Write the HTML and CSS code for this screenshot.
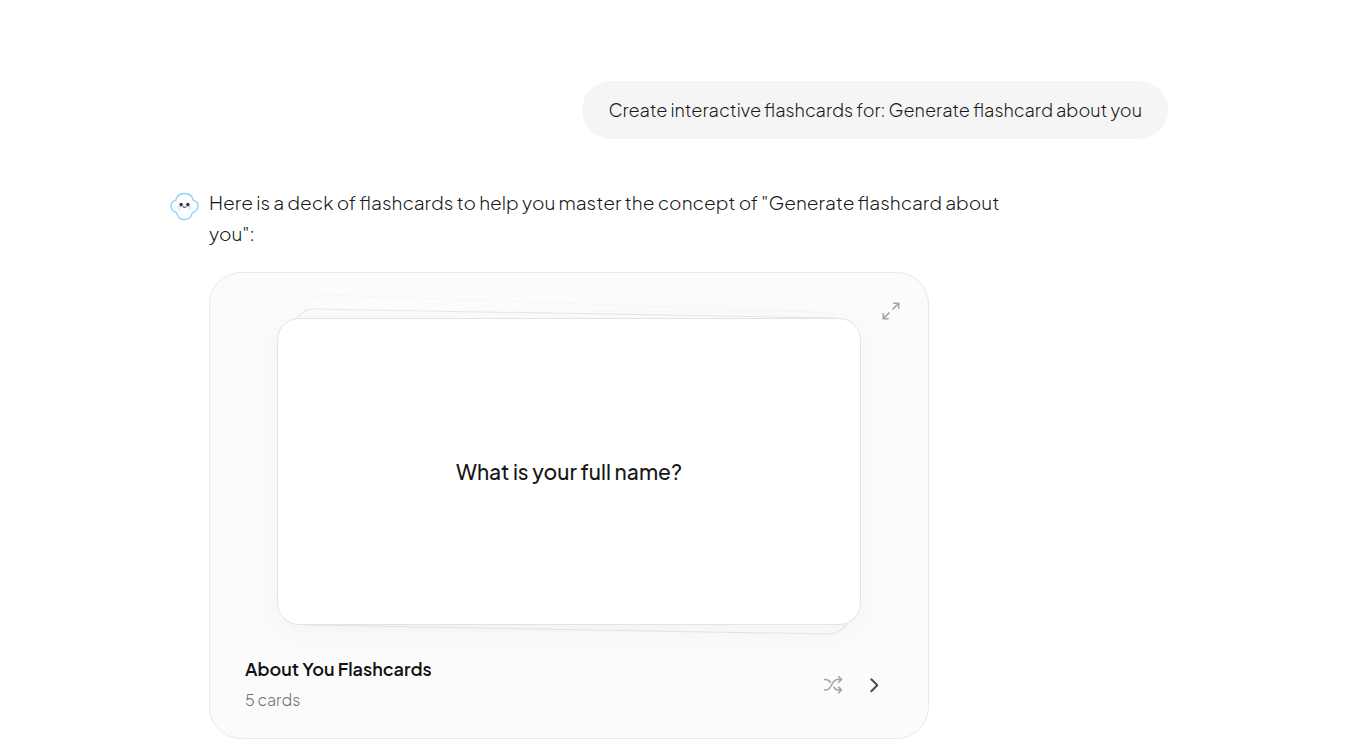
FILE: index.html
```html
<!DOCTYPE html>
<html lang="en">
<head>
<meta charset="utf-8">
<meta name="viewport" content="width=device-width, initial-scale=1">
<title>Flashcards</title>
<link rel="stylesheet" href="styles.css">
</head>
<body>
<main class="chat">
  <p class="prompt">Create interactive flashcards for: Generate flashcard about you</p>
  <article class="reply">
    <svg class="avatar" viewBox="0 0 30 30" fill="none" aria-hidden="true">
      <path d="M6 8.500C7 3.500 11 1.500 15 1.500S23 3.500 24 8.500C27.500 9.500 29 12 29 14.500C29 18 26.500 20 23.800 21C22.800 21.500 23 22.500 22 24.500C20.500 27.500 18 28.500 15 28.500S9.500 27.500 8 24.500C7 22.500 7.200 21.500 6.200 21C3.500 20 1 18 1 14.500C1 12 2.500 9.500 6 8.500Z" fill="#fdfeff" stroke="#8fd2f4" stroke-width="1.400"/>
      <circle cx="9.500" cy="16.300" r="2" fill="#dceefe"/>
      <circle cx="20.500" cy="16.300" r="2" fill="#dceefe"/>
      <ellipse cx="11.500" cy="13" rx="1.700" ry="2" fill="#34343c"/>
      <ellipse cx="18.500" cy="13" rx="1.700" ry="2" fill="#34343c"/>
      <path d="M13.500 15Q15 17 16.500 15" stroke="#55505c" stroke-width="1.200" stroke-linecap="round"/>
    </svg>
    <div class="content">
      <p class="intro">Here is a deck of flashcards to help you master the concept of "Generate flashcard about you":</p>
      <section class="panel" aria-labelledby="deck-title">
        <button class="icon-button expand" type="button" aria-label="Expand">
          <svg width="20" height="20" viewBox="0 0 20 20" fill="none" stroke="#a3a3a3" stroke-width="1.600"><path d="M11.500 8.500 18 2M12.300 2.300H17.700V7.700M8.500 11.500 2 18M2.300 12.300V17.700H7.700"/></svg>
        </button>
        <div class="deck">
          <div class="sheet sheet-last"></div>
          <div class="sheet sheet-next"></div>
          <button class="card" type="button">What is your full name?</button>
        </div>
        <footer class="deck-footer">
          <div>
            <h2 class="title" id="deck-title">About You Flashcards</h2>
            <p class="count">5 cards</p>
          </div>
          <div class="actions">
            <button class="icon-button" type="button" aria-label="Shuffle">
              <svg width="20" height="20" viewBox="0 0 20 20" fill="none" stroke="#a3a3a3" stroke-width="1.600" stroke-linecap="round" stroke-linejoin="round"><path d="M1.500 4.500H2.500C5 4.500 6.200 5.500 7.200 7.400M1.500 15H3C9.500 15 8 4.500 14.500 4.500H18.500M11 12.200C12 14 13 15 15 15H18.500M15.700 1.700 18.500 4.500 15.700 7.300M15.700 12.200 18.500 15 15.700 17.800"/></svg>
            </button>
            <button class="icon-button" type="button" aria-label="Next card">
              <svg width="20" height="20" viewBox="0 0 20 20" fill="none" stroke="#4d4d4d" stroke-width="2" stroke-linecap="round" stroke-linejoin="round"><path d="M7.300 4.200 13.300 10.200 7.300 16.200"/></svg>
            </button>
          </div>
        </footer>
      </section>
    </div>
  </article>
</main>
</body>
</html>
```
FILE: styles.css
```css
* {
  box-sizing: border-box;
}

body {
  margin: 0;
  padding: 0 16px 0 0;
  background: #fff;
  color: #171717;
  font-family: "Plus Jakarta Sans", Inter, sans-serif;
  font-weight: 300;
}

h2,
p {
  margin: 0;
}

button {
  border: 0;
  padding: 0;
  background: none;
  color: inherit;
  font: inherit;
  cursor: pointer;
}

.chat {
  display: flex;
  flex-direction: column;
  gap: 48px;
  max-width: 998px;
  margin: 0 auto;
  padding: 81px 0 16px;
}

.prompt {
  align-self: flex-end;
  padding: 16px 26px;
  border-radius: 29px;
  background: #f5f5f5;
  font-size: 18px;
  line-height: 26px;
}

.reply {
  display: flex;
  gap: 10px;
}

.avatar {
  flex: none;
  width: 29px;
  height: 29px;
  margin-top: 5px;
}

.content {
  flex: 1;
  max-width: 820px;
}

.intro {
  margin-bottom: 23px;
  font-size: 19px;
  line-height: 31px;
}

.panel {
  position: relative;
  max-width: 720px;
  padding: 45px 34px 26px 35px;
  border: 1px solid #e9e9e9;
  border-radius: 32px;
  background: #fbfbfb;
}

.expand {
  position: absolute;
  top: 18px;
  right: 17px;
}

.deck {
  position: relative;
  margin: 0 33px 0 32px;
}

.card {
  position: relative;
  display: block;
  width: 100%;
  min-height: 307px;
  border: 1px solid #e4e4e4;
  border-radius: 22px;
  background: #fff;
  box-shadow: 0 8px 28px rgba(0, 0, 0, 0.03);
  font-size: 21px;
  font-weight: 500;
}

.sheet {
  position: absolute;
  border: 1px solid #e7e7e7;
  border-radius: 22px;
  background: #fbfbfb;
}

.sheet-next {
  inset: -5px 8px -5px 13px;
  transform: rotate(1deg);
}

.sheet-last {
  inset: -15px 22px 10px;
  border-color: #f5f5f5;
  transform: rotate(2deg);
}

.deck-footer {
  display: flex;
  align-items: flex-end;
  justify-content: space-between;
  margin-top: 30px;
}

.title {
  color: #111;
  font-size: 18px;
  font-weight: 600;
  line-height: 28px;
}

.count {
  margin-top: 5px;
  color: #737373;
  font-size: 16px;
  line-height: 24px;
}

.actions {
  display: flex;
  gap: 1px;
  padding-bottom: 7px;
}

.icon-button {
  display: grid;
  place-items: center;
  width: 40px;
  height: 40px;
}
```
